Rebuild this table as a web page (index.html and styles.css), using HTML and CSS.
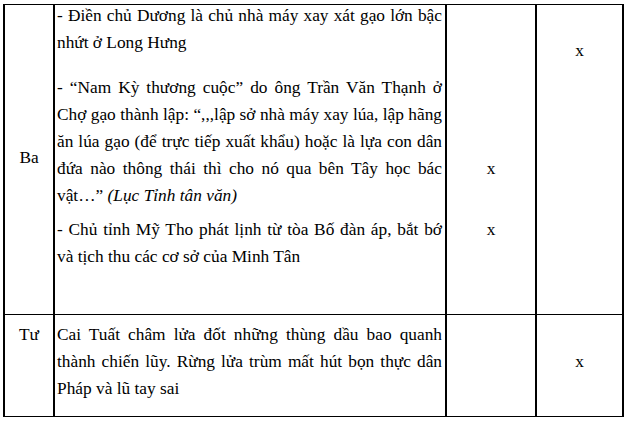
FILE: index.html
```html
<!DOCTYPE html>
<html>
<head>
<meta charset="utf-8">
<title>Bảng</title>
<link rel="stylesheet" href="styles.css">
</head>
<body>
<div class="sheet">
  <div class="cell label row-ba">Ba</div>
  <div class="cell content row-ba">
    <p class="para para-1">
      <span class="ln">- Điền chủ Dương là chủ nhà máy xay xát gạo lớn bậc</span>
      <span class="ln ln-end">nhứt ở Long Hưng</span>
    </p>
    <p class="para para-2">
      <span class="ln">- “Nam Kỳ thương cuộc” do ông Trần Văn Thạnh ở</span>
      <span class="ln">Chợ gạo thành lập: “,,,lập sở nhà máy xay lúa, lập hãng</span>
      <span class="ln">ăn lúa gạo (để trực tiếp xuất khẩu) hoặc là lựa con dân</span>
      <span class="ln">đứa nào thông thái thì cho nó qua bên Tây học bác</span>
      <span class="ln ln-end">vật…” <i class="src">(Lục Tỉnh tân văn)</i></span>
    </p>
    <p class="para para-3">
      <span class="ln">- Chủ tỉnh Mỹ Tho phát lịnh từ tòa Bố đàn áp, bắt bớ</span>
      <span class="ln ln-end">và tịch thu các cơ sở của Minh Tân</span>
    </p>
  </div>
  <div class="cell mark mark-c3 row-ba">
    <span class="x">x</span>
    <span class="x x-second">x</span>
  </div>
  <div class="cell mark mark-c4 row-ba">
    <span class="x">x</span>
  </div>

  <div class="cell label row-tu last">Tư</div>
  <div class="cell content row-tu last">
    <p class="para">
      <span class="ln">Cai Tuất châm lửa đốt những thùng dầu bao quanh</span>
      <span class="ln">thành chiến lũy. Rừng lửa trùm mất hút bọn thực dân</span>
      <span class="ln ln-end">Pháp và lũ tay sai</span>
    </p>
  </div>
  <div class="cell mark row-tu last"></div>
  <div class="cell mark mark-c4b row-tu last">
    <span class="x">x</span>
  </div>
</div>
</body>
</html>
```

FILE: styles.css
```css
html, body {
  margin: 0;
  padding: 0;
  background: #ffffff;
}

body {
  font-family: "Liberation Serif";
  font-size: 17.33px;
}

.sheet {
  margin: 4px 0 0 3px;
  width: 621px;
  display: grid;
  grid-template-columns: 52px 392px 90px 87px;
  grid-template-rows: 310px 103px;
  color: #000000;
}

.cell {
  box-sizing: border-box;
  border-top: 1px solid #000;
  border-right: 2px solid #000;
  line-height: 27px;
  font-family: "Liberation Serif";
  font-size: 17.33px;
}

.ln {
  font-family: "Liberation Serif";
}

.x {
  font-family: "Liberation Serif";
}

.src {
  font-family: "Liberation Serif";
  font-style: italic;
}

.cell.last {
  border-bottom: 1px solid #000;
}

.label {
  border-left: 2px solid #000;
  display: flex;
  justify-content: center;
}

.label.row-ba {
  align-items: center;
  padding-bottom: 4px;
}

.label.row-tu {
  align-items: flex-start;
  padding-top: 6px;
}

.content {
  padding: 0 3px 0 2px;
}

.content.row-tu {
  padding-top: 6px;
}

.para {
  margin: 0;
  line-height: 27px;
}

.para-1 {
  margin-top: -3px;
}

.para-2 {
  margin-top: 18px;
}

.para-3 {
  margin-top: 7px;
}

.ln {
  display: block;
  text-align: justify;
  text-align-last: justify;
  white-space: nowrap;
}

.ln-end {
  text-align-last: left;
}

.mark {
  display: flex;
  flex-direction: column;
  align-items: center;
}

.mark-c3 {
  padding-top: 150px;
}

.x-second {
  margin-top: 34px;
}

.mark-c4 {
  padding-top: 32px;
}

.mark-c4b {
  padding-top: 33px;
}
```
